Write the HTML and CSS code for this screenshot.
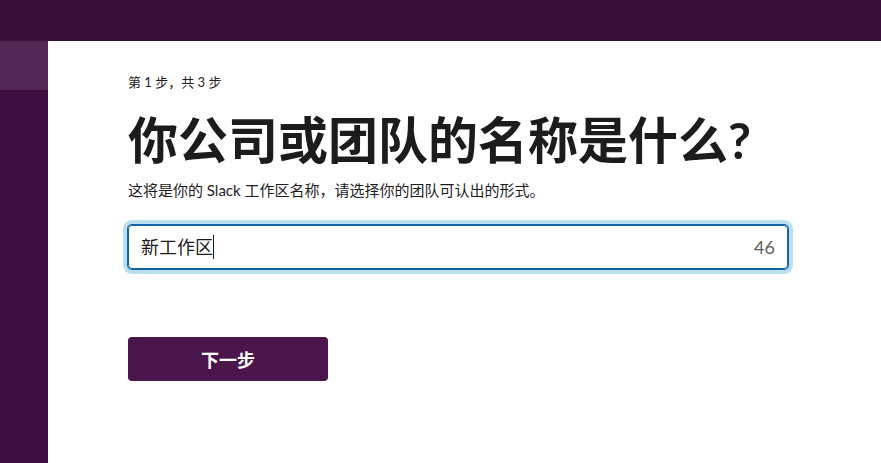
FILE: index.html
```html
<!DOCTYPE html>
<html lang="zh-CN">
<head>
<meta charset="utf-8">
<title>Slack</title>
<link rel="stylesheet" href="styles.css">
</head>
<body>
<div class="topbar"></div>
<div class="body">
  <aside class="sidebar">
    <div class="side-item"></div>
  </aside>
  <main class="main">
    <div class="step">第 1 步，共 3 步</div>
    <h1 class="title">你公司或团队的名称是什么?</h1>
    <p class="subtitle">这将是你的 Slack 工作区名称，请选择你的团队可认出的形式。</p>
    <div class="field">
      <span class="value">新工作区</span><span class="caret"></span>
      <span class="count">46</span>
    </div>
    <button class="next">下一步</button>
  </main>
</div>
</body>
</html>
```
FILE: styles.css
```css
html, body {
  margin: 0;
  padding: 0;
  height: 100%;
  background: #fff;
  font-family: Lato, "Noto Sans CJK SC", sans-serif;
  color: #1d1c1d;
}
.topbar {
  height: 41px;
  background: #39103a;
}
.body {
  display: flex;
  height: calc(100% - 41px);
}
.sidebar {
  width: 48px;
  flex: none;
  background: #3f0e40;
}
.side-item {
  height: 49px;
  background: #532754;
}
.main {
  flex: 1;
  padding: 32px 0 0 80px;
}
.step {
  font-size: 13px;
  line-height: 18px;
}
.title {
  margin: 21px 0 0;
  font-size: 50px;
  line-height: 56px;
  font-weight: 700;
  letter-spacing: 0;
}
.subtitle {
  margin: 11px 0 0;
  font-size: 15px;
  line-height: 22px;
}
.field {
  margin-top: 24px;
  width: 660px;
  height: 44px;
  box-sizing: border-box;
  border: 1px solid #1264a3;
  border-radius: 4px;
  box-shadow: 0 0 0 1px #1264a3, 0 0 0 5px rgba(29, 155, 209, 0.3);
  display: flex;
  align-items: center;
  padding: 0 12px;
  font-size: 18px;
}
.value {
  line-height: 24px;
}
.caret {
  width: 1px;
  height: 24px;
  background: #1d1c1d;
}
.count {
  margin-left: auto;
  color: #616061;
}
.next {
  display: block;
  margin-top: 68px;
  width: 200px;
  height: 44px;
  border: none;
  border-radius: 4px;
  background: #4a154b;
  color: #fff;
  font-family: Lato, "Noto Sans CJK SC", sans-serif;
  font-size: 18px;
  font-weight: 700;
  padding: 0;
}
```
